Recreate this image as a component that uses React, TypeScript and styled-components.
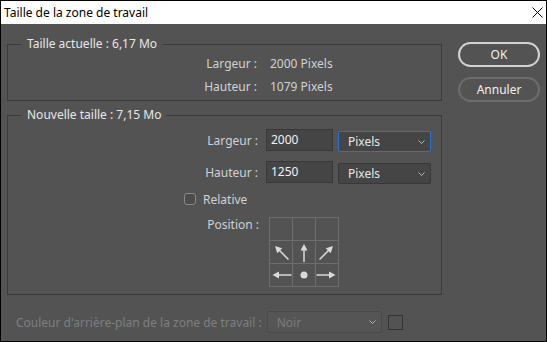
import React from 'react';
import styled, { createGlobalStyle } from 'styled-components';

const GlobalStyle = createGlobalStyle`
  html, body {
    margin: 0;
    padding: 0;
    background: #535353;
  }
  * {
    box-sizing: border-box;
  }
`;

const Window = styled.div`
  width: 547px;
  height: 342px;
  border: 1px solid #000;
  display: flex;
  flex-direction: column;
  font-family: "Noto Sans", "Liberation Sans", sans-serif;
  font-size: 12px;
  overflow: hidden;
`;

const TitleBar = styled.div`
  height: 23px;
  background: #fff;
  color: #000;
  display: flex;
  align-items: center;
  justify-content: space-between;
  padding: 0 2px 0 3px;
  flex-shrink: 0;
`;

const CloseButton = styled.div`
  width: 14px;
  height: 14px;
  display: flex;
  align-items: center;
  justify-content: center;
`;

const Body = styled.div`
  flex: 1;
  background: #535353;
  display: flex;
  gap: 16px;
  padding: 12px 5px 0 6px;
`;

const LeftColumn = styled.div`
  width: 435px;
  display: flex;
  flex-direction: column;
`;

const Group = styled.fieldset<{ $gap: number; $top: number }>`
  margin: 0;
  border: 1px solid #3c3c3c;
  padding: ${(p) => p.$top}px 0 5px 0;
  display: flex;
  flex-direction: column;
  gap: ${(p) => p.$gap}px;
  & + & {
    margin-top: 6px;
    padding-bottom: 7px;
  }
`;

const Legend = styled.legend`
  margin-left: 14px;
  padding: 0 5px;
  line-height: 16px;
  color: #e8e8e8;
`;

const InfoRow = styled.div`
  display: grid;
  grid-template-columns: 249px auto;
  column-gap: 13px;
  line-height: 16px;
  color: #cfd2d6;
`;

const Label = styled.span`
  text-align: right;
  color: #cfd2d6;
  line-height: 16px;
`;

const FieldRow = styled.div`
  display: grid;
  grid-template-columns: 250px 67px 93px;
  column-gap: 8px;
  align-items: start;
  & > ${Label} {
    align-self: center;
  }
`;

const TextInput = styled.div`
  height: 22px;
  background: #454545;
  border: 1px solid #383838;
  color: #f2f2f2;
  padding: 0 4px;
  line-height: 20px;
`;

const Select = styled.div<{ $focus?: boolean; $disabled?: boolean }>`
  height: 21px;
  margin: 2px 3px 0 -3px;
  background: ${(p) => (p.$disabled ? '#555555' : '#454545')};
  border: 1px solid ${(p) => (p.$focus ? '#2d6fd2' : p.$disabled ? '#4a4a4a' : '#383838')};
  border-radius: 2px;
  color: ${(p) => (p.$disabled ? '#7c7c7c' : '#e8e8e8')};
  display: flex;
  align-items: center;
  justify-content: space-between;
  padding: 0 5px 0 9px;
`;

const CheckRow = styled.label`
  display: flex;
  align-items: center;
  gap: 7px;
  padding-left: 176px;
  height: 16px;
  margin-top: -2px;
  color: #cfd2d6;
`;

const CheckBox = styled.span`
  width: 12px;
  height: 12px;
  border: 1px solid #8a8a8a;
  border-radius: 3px;
  background: #4c4c4c;
`;

const PositionRow = styled.div`
  display: grid;
  grid-template-columns: 251px 70px;
  column-gap: 10px;
  align-items: start;
  margin-top: 1px;
`;

const AnchorGrid = styled.div`
  display: grid;
  grid-template-columns: repeat(3, 1fr);
  grid-template-rows: repeat(3, 1fr);
  width: 70px;
  height: 70px;
  border-top: 1px solid #6e6e6e;
  border-left: 1px solid #6e6e6e;
`;

const AnchorCell = styled.div`
  border-right: 1px solid #6e6e6e;
  border-bottom: 1px solid #6e6e6e;
  display: flex;
  align-items: center;
  justify-content: center;
`;

const BottomRow = styled.div`
  display: flex;
  align-items: center;
  margin-top: 16px;
  padding-left: 9px;
  height: 22px;
  color: #7c7f82;
`;

const BottomSelect = styled(Select)`
  width: 115px;
  height: 22px;
  margin: 0 0 0 5px;
`;

const Swatch = styled.span`
  width: 15px;
  height: 15px;
  margin-left: 6px;
  border: 1px solid #333;
`;

const RightColumn = styled.div`
  display: flex;
  flex-direction: column;
  gap: 10px;
  padding-top: 6px;
`;

const Button = styled.button<{ $primary?: boolean }>`
  width: 82px;
  height: 25px;
  border-radius: 13px;
  border: 2px solid ${(p) => (p.$primary ? '#d2d2d2' : '#6c6c6c')};
  background: transparent;
  color: #f0f0f0;
  font-family: inherit;
  font-size: 12px;
  padding: 0;
`;

const Chevron = () => (
  <svg width="7" height="4" viewBox="0 0 7 4">
    <path d="M0.5 0.5 L3.5 3.5 L6.5 0.5" fill="none" stroke="#b8b8b8" strokeWidth="1" />
  </svg>
);

type Dir = 'nw' | 'n' | 'ne' | 'w' | 'c' | 'e' | null;

// line + arrow head for each anchor cell, in a 22x22 box
const arrowShapes: Record<Exclude<Dir, null | 'c'>, { line: string; head: string }> = {
  n: { line: 'M11 21 L11 8', head: 'M11 3 L14.5 9.5 L7.5 9.5 Z' },
  w: { line: 'M21.5 11 L8 11', head: 'M2.5 11 L9 7.5 L9 14.5 Z' },
  e: { line: 'M0.5 11 L14 11', head: 'M19.5 11 L13 7.5 L13 14.5 Z' },
  nw: { line: 'M18.5 18.5 L8 8', head: 'M5 5 L12.2 7.3 L7.3 12.2 Z' },
  ne: { line: 'M3.5 18.5 L14 8', head: 'M17 5 L9.8 7.3 L14.7 12.2 Z' },
};

const Arrow = ({ dir }: { dir: Dir }) => {
  if (!dir) return null;
  const fill = '#dadada';
  if (dir === 'c') {
    return (
      <svg width="22" height="22" viewBox="0 0 22 22">
        <circle cx="11" cy="11" r="3.5" fill={fill} />
      </svg>
    );
  }
  const s = arrowShapes[dir];
  return (
    <svg width="22" height="22" viewBox="0 0 22 22">
      <path d={s.line} stroke={fill} strokeWidth="1.5" fill="none" />
      <path d={s.head} fill={fill} />
    </svg>
  );
};

const anchors: Dir[] = [null, null, null, 'nw', 'n', 'ne', 'w', 'c', 'e'];

export default function App() {
  return (
    <>
      <GlobalStyle />
      <Window>
        <TitleBar>
          <span>Taille de la zone de travail</span>
          <CloseButton>
            <svg width="11" height="11" viewBox="0 0 11 11">
              <path d="M0.5 0.5 L10.5 10.5 M10.5 0.5 L0.5 10.5" stroke="#000" strokeWidth="1" />
            </svg>
          </CloseButton>
        </TitleBar>
        <Body>
          <LeftColumn>
            <Group $gap={7} $top={4}>
              <Legend>Taille actuelle : 6,17 Mo</Legend>
              <InfoRow>
                <Label>Largeur :</Label>
                <span>2000 Pixels</span>
              </InfoRow>
              <InfoRow>
                <Label>Hauteur :</Label>
                <span>1079 Pixels</span>
              </InfoRow>
            </Group>
            <Group $gap={9} $top={6}>
              <Legend>Nouvelle taille : 7,15 Mo</Legend>
              <FieldRow>
                <Label>Largeur :</Label>
                <TextInput>2000</TextInput>
                <Select $focus>
                  Pixels
                  <Chevron />
                </Select>
              </FieldRow>
              <FieldRow>
                <Label>Hauteur :</Label>
                <TextInput>1250</TextInput>
                <Select>
                  Pixels
                  <Chevron />
                </Select>
              </FieldRow>
              <CheckRow>
                <CheckBox />
                Relative
              </CheckRow>
              <PositionRow>
                <Label>Position :</Label>
                <AnchorGrid>
                  {anchors.map((d, i) => (
                    <AnchorCell key={i}>
                      <Arrow dir={d} />
                    </AnchorCell>
                  ))}
                </AnchorGrid>
              </PositionRow>
            </Group>
            <BottomRow>
              Couleur d'arrière-plan de la zone de travail :
              <BottomSelect $disabled>
                Noir
                <Chevron />
              </BottomSelect>
              <Swatch />
            </BottomRow>
          </LeftColumn>
          <RightColumn>
            <Button $primary>OK</Button>
            <Button>Annuler</Button>
          </RightColumn>
        </Body>
      </Window>
    </>
  );
}
